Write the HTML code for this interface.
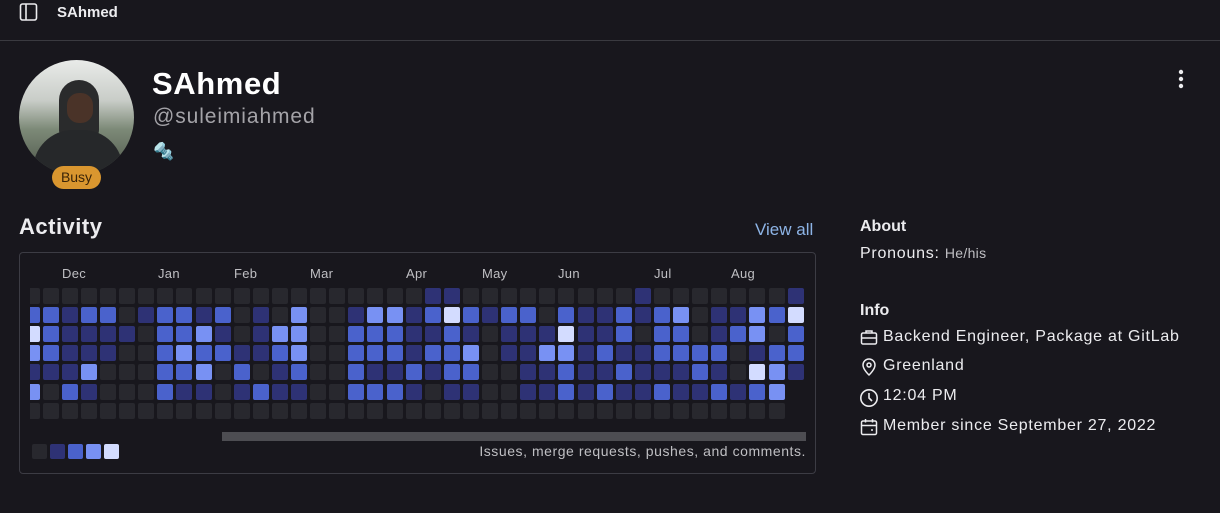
<!DOCTYPE html>
<html><head><meta charset="utf-8">
<style>
*{margin:0;padding:0;box-sizing:border-box}
body{width:1220px;height:513px;overflow:hidden;background:#18171d;font-family:"Liberation Sans",sans-serif;color:#ececef;position:relative}
.a{position:absolute;white-space:nowrap}
.c{position:absolute;width:16px;height:16px;border-radius:2px}
.l0{background:#28282e}.l1{background:#2e3275}.l2{background:#4a62cc}.l3{background:#7891f3}.l4{background:#d3dcff}
.m{position:absolute;top:266px;font-size:13px;letter-spacing:0.3px;color:#bfbfc3}
.info{font-size:16px;letter-spacing:0.75px;color:#ececef}
</style></head><body>
<svg class="a" style="left:19px;top:3px" width="20" height="18" viewBox="0 0 20 18"><rect x="1.5" y="1" width="16" height="16" rx="2" fill="none" stroke="#ececef" stroke-width="1.6"/><line x1="7" y1="1" x2="7" y2="17" stroke="#ececef" stroke-width="1.6"/></svg>
<div class="a" style="left:57px;top:4px;font-size:15px;font-weight:bold">SAhmed</div>
<div class="a" style="left:0;top:40px;width:1220px;height:1px;background:#3a3a40"></div>

<div class="a" style="left:19px;top:60px;width:115px;height:115px;border-radius:50%;overflow:hidden;background:linear-gradient(180deg,#e9ebe9 0%,#c9cdc8 35%,#7d8a78 60%,#4c5448 100%)">
 <div class="a" style="left:40px;top:20px;width:40px;height:60px;border-radius:20px 20px 10px 10px;background:#2a2b2c"></div>
 <div class="a" style="left:48px;top:33px;width:26px;height:30px;border-radius:12px;background:#4a3328"></div>
 <div class="a" style="left:14px;top:70px;width:90px;height:60px;border-radius:40px 40px 0 0;background:#26282a"></div>
</div>
<div class="a" style="left:52px;top:166px;width:49px;height:23px;border-radius:12px;background:#d9962f;color:#3a2408;font-size:14px;text-align:center;line-height:23px">Busy</div>

<div class="a" style="left:152px;top:66px;font-size:31px;letter-spacing:0.6px;font-weight:bold;color:#fff">SAhmed</div>
<div class="a" style="left:153px;top:105px;font-size:21px;letter-spacing:0.9px;color:#a4a3a8">@suleimiahmed</div>
<div class="a" style="left:153px;top:142px;font-size:17px;color:#8fd0d8">🔩</div>

<svg class="a" style="left:1177px;top:69px" width="8" height="22"><circle cx="4" cy="3" r="2.2" fill="#ececef"/><circle cx="4" cy="10" r="2.2" fill="#ececef"/><circle cx="4" cy="17" r="2.2" fill="#ececef"/></svg>

<div class="a" style="left:19px;top:214px;font-size:22px;letter-spacing:0.5px;font-weight:bold">Activity</div>
<div class="a" style="left:755px;top:220px;font-size:17px;color:#8db4e6">View all</div>

<div class="a" id="box" style="left:19px;top:252px;width:797px;height:222px;border:1px solid #3c3c44;border-radius:4px;overflow:hidden"></div>
<div class="m" style="left:62px">Dec</div><div class="m" style="left:158px">Jan</div><div class="m" style="left:234px">Feb</div><div class="m" style="left:310px">Mar</div><div class="m" style="left:406px">Apr</div><div class="m" style="left:482px">May</div><div class="m" style="left:558px">Jun</div><div class="m" style="left:654px">Jul</div><div class="m" style="left:731px">Aug</div>
<div id="g"></div>
<div class="a" style="left:222px;top:432px;width:584px;height:9px;background:#4d4d52"></div>
<div class="c l0" style="left:32px;top:444px;width:15px;height:15px"></div>
<div class="c l1" style="left:50px;top:444px;width:15px;height:15px"></div>
<div class="c l2" style="left:68px;top:444px;width:15px;height:15px"></div>
<div class="c l3" style="left:86px;top:444px;width:15px;height:15px"></div>
<div class="c l4" style="left:104px;top:444px;width:15px;height:15px"></div>
<div class="a" style="right:414px;top:443px;font-size:14px;letter-spacing:0.55px;color:#bfbfc3">Issues, merge requests, pushes, and comments.</div>

<div class="a" style="left:860px;top:218px;font-size:16px;font-weight:bold">About</div>
<div class="a info" style="left:860px;top:245px">Pronouns: <span style="font-size:14px;letter-spacing:0.3px;color:#bfbfc3">He/his</span></div>
<div class="a" style="left:860px;top:302px;font-size:16px;font-weight:bold">Info</div>
<svg class="a" style="left:860px;top:328px" width="18" height="18" viewBox="0 0 18 18" fill="none" stroke="#ececef" stroke-width="1.5"><rect x="1.5" y="5" width="15" height="11" rx="1.5"/><path d="M6 5V3h6v2M1.5 10h15"/></svg>
<div class="a info" style="left:883px;top:328px">Backend Engineer, Package at GitLab</div>
<svg class="a" style="left:860px;top:358px" width="18" height="18" viewBox="0 0 18 18" fill="none" stroke="#ececef" stroke-width="1.5"><path d="M9 17s-6-5.5-6-10a6 6 0 0 1 12 0c0 4.5-6 10-6 10z"/><circle cx="9" cy="7" r="2"/></svg>
<div class="a info" style="left:883px;top:357px">Greenland</div>
<svg class="a" style="left:859px;top:388px" width="20" height="20" viewBox="0 0 20 20" fill="none" stroke="#ececef" stroke-width="1.6"><circle cx="10" cy="10" r="8.2"/><path d="M10 5v5l3 3"/></svg>
<div class="a info" style="left:883px;top:387px">12:04 PM</div>
<svg class="a" style="left:860px;top:418px" width="18" height="18" viewBox="0 0 18 18" fill="none" stroke="#ececef" stroke-width="1.5"><rect x="1.5" y="3" width="15" height="13.5" rx="1.5"/><path d="M1.5 7.5h15M5.5 1v3.5M12.5 1v3.5M11 12h2"/></svg>
<div class="a info" style="left:883px;top:417px">Member since September 27, 2022</div>

<script>
var rows=[
"0"+"00000000000000000000"+"11000000000100000001",
"2"+"21220122120103001331"+"24212202112123011324",
"4"+"21111022310133002221"+"12101114112022012302",
"3"+"21110023221123002221"+"22301133121122220122",
"1"+"11300022302012002112"+"12200112112111210431",
"3"+"02100021101211002221"+"0110011212112112123x",
"0"+"00000000000000000000"+"0000000000000000000x"];
var h="";
for(var r=0;r<7;r++){var y=287.5+r*19.2;
 for(var i=0;i<41;i++){var v=rows[r][i];if(v==="x")continue;
  if(i===0){h+='<div class="c l'+v+'" style="left:30px;top:'+y+'px;width:10px;border-radius:0 2px 2px 0"></div>';}
  else{var x=42.7+(i-1)*19.1;h+='<div class="c l'+v+'" style="left:'+x+'px;top:'+y+'px"></div>';}
 }}
document.getElementById("g").innerHTML=h;
</script>
</body></html>
